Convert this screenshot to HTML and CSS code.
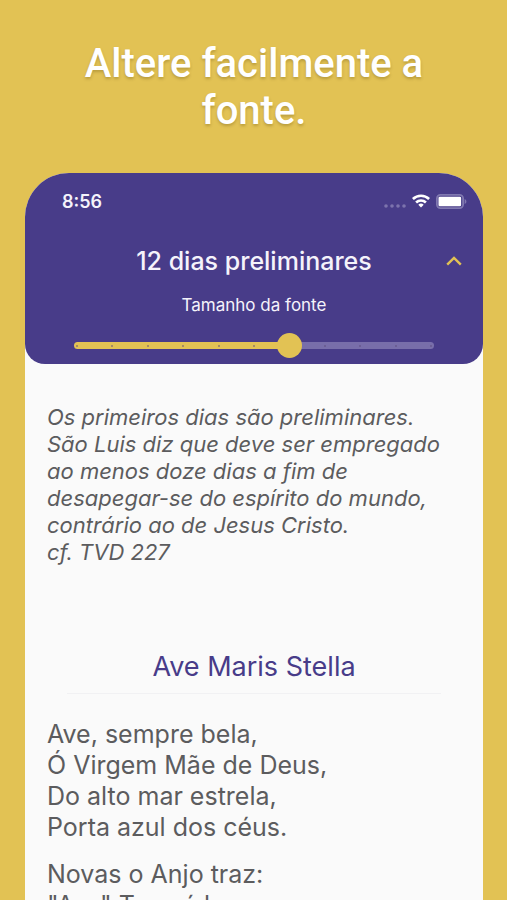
FILE: index.html
```html
<!DOCTYPE html>
<html lang="pt">
<head>
<meta charset="utf-8">
<meta name="viewport" content="width=device-width, initial-scale=1">
<title>12 dias preliminares</title>
<link rel="stylesheet" href="styles.css">
</head>
<body>
<div class="page">
  <h1 class="headline">Altere facilmente a fonte.</h1>
  <main class="phone">
    <header class="app-header">
      <div class="status-bar">
        <span class="clock">8:56</span>
        <div class="status-icons">
          <svg width="22" height="4" viewBox="0 0 22 4" fill="#7c73ad" aria-hidden="true"><circle cx="2" cy="2" r="1.8"/><circle cx="8" cy="2" r="1.8"/><circle cx="14" cy="2" r="1.8"/><circle cx="20" cy="2" r="1.8"/></svg>
          <svg width="18" height="14" viewBox="0 0 18 14" fill="none" stroke="#fff" stroke-width="2.6" aria-hidden="true"><path d="M.9 5a11.6 11.6 0 0 1 16.2 0"/><path d="M4.1 8.5a7 7 0 0 1 9.8 0"/><path d="M9 13.5 6.3 10.8a3.8 3.8 0 0 1 5.4 0z" fill="#fff" stroke="none"/></svg>
          <svg width="31" height="15" viewBox="0 0 31 15" aria-hidden="true"><rect x=".9" y=".9" width="26.2" height="13.2" rx="3.6" fill="none" stroke="#8078b0" stroke-width="1.8"/><rect x="2.5" y="2.7" width="22.6" height="9.6" rx="1.2" fill="#fff"/><path d="M28.6 5v5c1.2-.5 1.8-1.3 1.8-2.5s-.6-2-1.8-2.5z" fill="#8078b0"/></svg>
        </div>
      </div>
      <div class="title-row">
        <h2 class="title">12 dias preliminares</h2>
        <button class="collapse" type="button" aria-label="Recolher">
          <svg width="16" height="10" viewBox="0 0 16 10" fill="none" stroke="#e2c254" stroke-width="2.4" aria-hidden="true"><path d="M1.2 8.6 8 1.9l6.8 6.7"/></svg>
        </button>
      </div>
      <label class="size-label" for="font-size">Tamanho da fonte</label>
      <div class="slider">
        <div class="track"><i></i><i></i><i></i><i></i><i></i><i></i><i></i><i></i><i></i><i></i><i></i></div>
        <input class="range" id="font-size" type="range" min="0" max="10" value="6">
      </div>
    </header>
    <article class="content">
      <p class="intro">Os primeiros dias são preliminares. São Luis diz que deve ser empregado ao menos doze dias a fim de desapegar-se do espírito do mundo, contrário ao de Jesus Cristo.<br>cf. TVD 227</p>
      <h3 class="prayer-title">Ave Maris Stella</h3>
      <p class="verse">Ave, sempre bela,<br>Ó Virgem Mãe de Deus,<br>Do alto mar estrela,<br>Porta azul dos céus.</p>
      <p class="verse">Novas o Anjo traz:<br>"Ave" Tua só l</p>
    </article>
  </main>
</div>
</body>
</html>
```
FILE: styles.css
```css
* { box-sizing: border-box; }
body { margin: 0; background: #e2c254; font-family: Inter, sans-serif; }
h1, h2, h3, p { margin: 0; }
.page { height: 100vh; overflow: hidden; padding: 40px 24px 0 25px; }
.headline {
  padding: 0 48px;
  color: #fff;
  font: 500 40px/47px Roboto, sans-serif;
  text-align: center;
  text-shadow: 0 2px 3px rgba(90, 70, 10, .3);
}
.phone { margin-top: 39px; min-height: 100vh; border-radius: 44px 44px 0 0; background: #fafafa; overflow: hidden; }
.app-header { padding-bottom: 5px; background: #483c89; border-radius: 0 0 20px 20px; color: #f5f3fb; }
.status-bar { display: flex; justify-content: space-between; padding: 17px 16px 0 37px; height: 60px; }
.clock { font-size: 18px; font-weight: 600; line-height: 24px; }
.status-icons { display: flex; align-items: center; gap: 6px; height: 22px; }
.status-icons svg:first-child { align-self: flex-end; margin-bottom: 4px; }
.title-row { display: grid; grid-template-columns: 48px 1fr 48px; align-items: center; padding: 0 5px; height: 56px; }
.title { grid-column: 2; font-size: 25px; font-weight: 500; line-height: 32px; text-align: center; white-space: nowrap; }
.collapse { height: 40px; padding: 0; border: 0; background: none; }
.size-label { display: block; padding-top: 4px; font-size: 17px; line-height: 24px; text-align: center; }
.slider { display: grid; align-items: center; height: 42px; padding: 15px 39px 0; }
.slider > * { grid-area: 1 / 1; }
.track {
  display: flex; justify-content: space-between; align-items: center;
  height: 7px; margin: 0 10px; padding: 0 2px; border-radius: 4px;
  background: linear-gradient(90deg, #e2c254 60%, #786eaa 60%);
}
.track i { width: 2px; height: 2px; border-radius: 50%; background: #5b4b7b; opacity: .6; }
.range { position: relative; appearance: none; width: 100%; height: 25px; margin: 0; background: none; }
.range::-webkit-slider-thumb { appearance: none; width: 25px; height: 25px; border-radius: 50%; background: #e2c254; }
.content { padding: 40px 22px 0; color: #5c5c5e; }
.intro { padding-right: 14px; font-size: 22px; font-style: italic; line-height: 27px; }
.prayer-title {
  margin: 83px 20px 25px; padding-bottom: 8px;
  border-bottom: 1px solid #f1f1f3;
  color: #483c89; font-size: 27px; font-weight: 400; line-height: 36px; text-align: center;
}
.verse { margin-bottom: 16px; font-size: 25px; line-height: 31px; }
```
